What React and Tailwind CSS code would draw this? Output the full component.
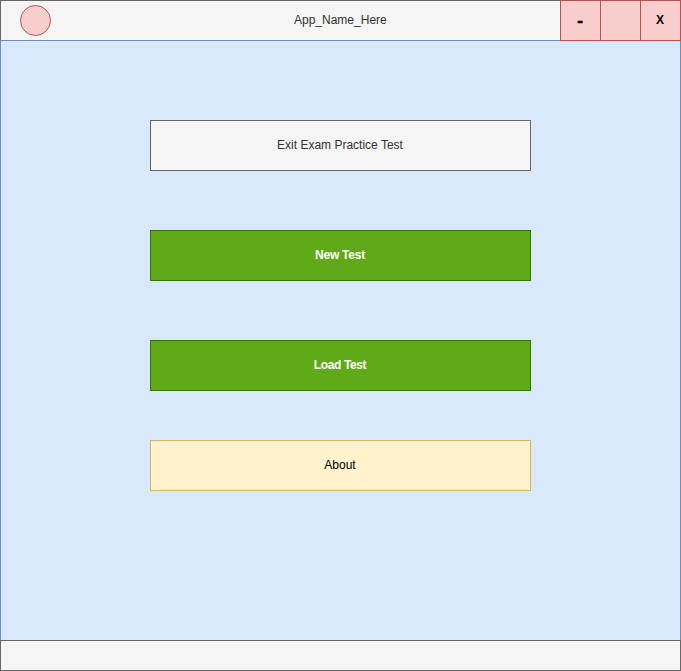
const box = "flex h-[51px] w-[381px] items-center justify-center border pb-0.5 pr-px";

export default function App() {
  return (
    <div className="flex h-[671px] w-[681px] flex-col bg-white font-['Liberation_Sans',Arial,sans-serif] text-[12px] leading-[14px] text-black">
      <header className="grid h-10 grid-cols-[1fr_93px_1fr] items-start border-x border-t border-[#666666] bg-[#f5f5f5]">
        <div className="pl-[19px] pt-1">
          <svg className="block h-[31px] w-[31px]" viewBox="0 0 31 31">
            <circle cx="15.5" cy="15.5" r="15" fill="#f8cecc" stroke="#b85450" />
          </svg>
        </div>
        <h1 className="pr-px pt-3 text-center text-[#333333]">App_Name_Here</h1>
        <div className="-mr-px -mt-px flex justify-end">
          <button className="relative z-10 flex h-[41px] w-[41px] items-center justify-center border border-[#b85450] bg-[#f8cecc] pr-px pt-px text-[17px] font-bold [-webkit-text-stroke:0.6px_black]">-</button>
          <button className="relative z-10 -ml-px h-[41px] w-[41px] border border-[#b85450] bg-[#f8cecc]" aria-label="Maximize" />
          <button className="relative z-10 -ml-px flex h-[41px] w-[41px] items-center justify-center border border-[#b85450] bg-[#f8cecc] pb-0.5 pr-px font-bold">X</button>
        </div>
      </header>
      <main className="flex h-[600px] flex-col items-center border-x border-t border-[#6c8ebf] bg-[#dae8fc] pt-[79px]">
        <div className={`${box} border-[#666666] bg-[#f5f5f5] text-[#333333]`}>Exit Exam Practice Test</div>
        <button className={`${box} mt-[59px] border-[#2d7600] bg-[#60a917] font-bold tracking-[-0.25px] text-white`}>New Test</button>
        <button className={`${box} mt-[59px] border-[#2d7600] bg-[#60a917] font-bold tracking-[-0.38px] text-white`}>Load Test</button>
        <button className={`${box} mt-[49px] border-[#d6b656] bg-[#fff2cc]`}>About</button>
      </main>
      <footer className="h-[31px] border border-[#666666] bg-[#f5f5f5]" />
    </div>
  );
}
